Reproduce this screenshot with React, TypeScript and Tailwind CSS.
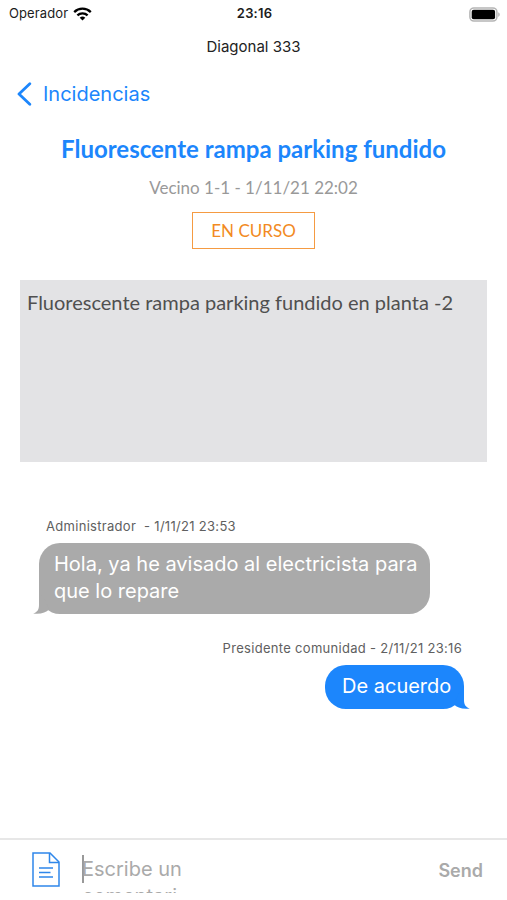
import React from 'react';

interface Message {
  id: number;
  author: string;
  lines: string[];
  own: boolean;
}

const messages: Message[] = [
  {
    id: 1,
    author: 'Administrador  - 1/11/21 23:53',
    lines: ['Hola, ya he avisado al electricista para', 'que lo repare'],
    own: false,
  },
  {
    id: 2,
    author: 'Presidente comunidad - 2/11/21 23:16',
    lines: ['De acuerdo'],
    own: true,
  },
];

function StatusBar() {
  return (
    <div className="grid grid-cols-3 items-center h-7 pl-[9px] pr-[7px] text-[13px] text-[#1c1c1c]">
      <div className="flex items-center gap-[5px]">
        <span className="tracking-[0.1px]">Operador</span>
        <svg className="w-[19px] h-[14px]" viewBox="0 0 19 14" fill="none" stroke="#000" strokeWidth="2.3">
          <path d="M1.2 5.1a11.8 11.8 0 0 1 16.6 0" />
          <path d="M4.4 8.4a7.2 7.2 0 0 1 10.2 0" />
          <path d="M9.5 13.6 6.7 10.8a4 4 0 0 1 5.6 0Z" fill="#000" stroke="none" />
        </svg>
      </div>
      <span className="text-center font-semibold tracking-[0.2px]">23:16</span>
      <svg className="w-[31px] h-[15px] justify-self-end" viewBox="0 0 31 15">
        <rect x="0.9" y="0.9" width="27" height="13.2" rx="4" fill="#fff" stroke="#b5b5b5" strokeWidth="1.5" />
        <rect x="2.7" y="2.7" width="23.4" height="9.6" rx="2" fill="#000" />
        <path d="M29.3 5.2v4.6c1.8-.8 1.8-3.8 0-4.6Z" fill="#aaa" />
      </svg>
    </div>
  );
}

function MessageBubble({ message }: { message: Message }) {
  if (message.own) {
    return (
      <div className="flex flex-col items-end pr-[43px]">
        <p className="h-5 mr-[2px] text-[13px] leading-5 tracking-[0.3px] text-[#606060]">{message.author}</p>
        <div className="relative mt-[7px] w-[139px] h-[44px] pl-[17px] rounded-[21px] bg-[#1c86fc] text-white text-[20px] leading-[43px] whitespace-nowrap">
          {message.lines[0]}
          <svg className="absolute right-[-6px] bottom-0 w-[16px] h-[22px]" viewBox="0 0 16 22">
            <path d="M0 17.5C3 20.5 8 22.5 15.8 21.6 11.5 20 10 17.5 10 13V0L4 8Z" fill="#1c86fc" />
          </svg>
        </div>
      </div>
    );
  }

  return (
    <div className="flex flex-col items-start pl-[39px]">
      <p className="h-5 ml-[7px] text-[13px] leading-5 tracking-[0.3px] text-[#606060] whitespace-pre">{message.author}</p>
      <div className="relative mt-[7px] w-[391px] h-[71px] pl-[15px] pt-[8px] rounded-[21px] bg-[#aaaaaa] text-white text-[20px] leading-[27px] whitespace-nowrap">
        {message.lines.map((line) => (
          <p key={line}>{line}</p>
        ))}
        <svg className="absolute left-[-6px] bottom-0 w-[16px] h-[22px]" viewBox="0 0 16 22">
          <path d="M16 17.5C13 20.5 8 22.5.2 21.6 4.5 20 6 17.5 6 13V0l6 8Z" fill="#aaaaaa" />
        </svg>
      </div>
    </div>
  );
}

function Composer() {
  return (
    <div className="flex items-start h-[62px] border-t-2 border-[#e7e7e7]">
      <svg className="w-[28px] h-[35px] mt-[12px] ml-[32px] shrink-0" viewBox="0 0 28 35" fill="none" stroke="#2f87ea" strokeWidth="1.5">
        <path d="M1 1h17l9 9v24H1Z" />
        <path d="M17.5 1v9.5H27" />
        <path d="M7 16h14M7 20.5h11.5M7 25h14" />
      </svg>
      <div className="flex h-[53px] ml-[22px] w-[110px] overflow-hidden">
        <span className="w-[2px] h-[28px] mt-[15px] -mr-[2px] shrink-0 bg-[#999]" />
        <p className="mt-[16px] text-[20px] leading-[27px] text-[#aaa]">
          Escribe un
          <br />
          comentari
        </p>
      </div>
      <span className="ml-auto mr-[24px] mt-[18px] text-[18px] leading-[26px] font-semibold text-[#aaa]">Send</span>
    </div>
  );
}

export default function App() {
  return (
    <div className="flex flex-col w-[507px] h-[900px] overflow-hidden bg-white font-['Inter',sans-serif]">
      <StatusBar />
      <p className="h-[38px] text-center text-[15px] leading-[38px] text-[#222]">Diagonal 333</p>

      <div className="flex items-center h-[56px] pl-[17px] text-[#1c86fc]">
        <svg className="w-[15px] h-[24px]" viewBox="0 0 15 24" fill="none" stroke="#1c86fc" strokeWidth="2.8" strokeLinecap="round" strokeLinejoin="round">
          <path d="M12.8 1.8 2 12l10.8 10.2" />
        </svg>
        <span className="ml-[11px] text-[20px]">Incidencias</span>
      </div>

      <div className="flex flex-col items-center font-['Lato',sans-serif]">
        <h1 className="mt-[11px] text-[24px] leading-[32px] font-bold text-[#1c86fc] whitespace-nowrap">
          Fluorescente rampa parking fundido
        </h1>
        <p className="mt-[11px] text-[17px] leading-6 text-[#999]">Vecino 1-1 - 1/11/21 22:02</p>
        <span className="mt-[12px] w-[123px] h-[37px] border-[1.5px] border-[#f59b42] text-center text-[17px] leading-[36px] text-[#f28a22]">
          EN CURSO
        </span>
      </div>

      <div className="mt-[31px] mx-[20px] w-[467px] h-[182px] shrink-0 bg-[#e3e3e5] px-[7px] pt-[9px] font-['Lato',sans-serif] text-[20px] leading-[27px] text-[#505050] whitespace-nowrap">
        Fluorescente rampa parking fundido en planta -2
      </div>

      <div className="flex flex-col gap-[24px] mt-[54px] grow">
        {messages.map((message) => (
          <MessageBubble key={message.id} message={message} />
        ))}
      </div>

      <Composer />
    </div>
  );
}
